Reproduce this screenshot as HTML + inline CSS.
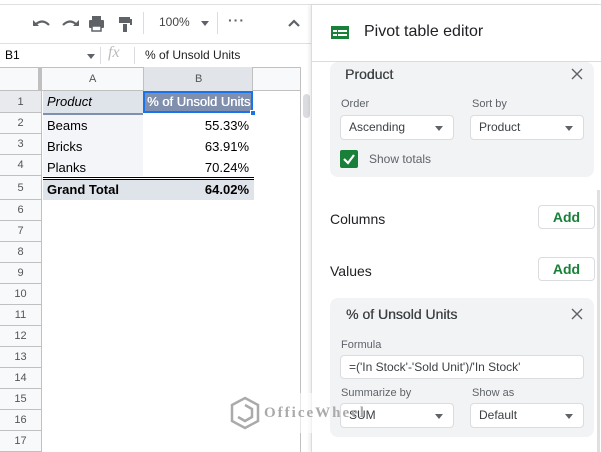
<!DOCTYPE html>
<html><head><style>
*{box-sizing:border-box;margin:0;padding:0}
body{width:601px;height:452px;overflow:hidden;background:#fff;font-family:"Liberation Sans",Arial,sans-serif;position:relative}
.a{position:absolute}
.rh{position:absolute;left:0;width:42px;text-align:center;font-size:11px;color:#555;background:#f8f9fa;border-bottom:1px solid #c0c0c0;border-right:1px solid #c0c0c0}
.cell{position:absolute;font-size:13px;color:#000;padding:0 4px;line-height:21px}
.card{position:absolute;left:330px;width:264px;background:#f1f3f4;border-radius:8px}
.dd{position:absolute;height:25px;background:#fff;border:1px solid #dadce0;border-radius:4px;font-size:12px;color:#3c4043;padding-left:8px;line-height:23px}
.dd:after{content:"";position:absolute;right:10px;top:10px;border:4px solid transparent;border-top:5px solid #5f6368}
.dd.nf:after{display:none}
.lbl{position:absolute;font-size:11px;color:#5f6368}
.add{position:absolute;left:538px;width:57px;height:24px;border:1px solid #dadce0;border-radius:4px;background:#fff;color:#188038;font-size:14px;font-weight:bold;text-align:center;line-height:22px}
.ttl{position:absolute;font-size:14px;color:#3c4043;text-shadow:0.3px 0 0 #3c4043}
</style></head><body>
<div class="a" style="left:0;top:4px;width:601px;height:1px;background:#e0e0e0"></div>
<svg class="a" style="left:30px;top:14px" width="240" height="20" viewBox="0 0 240 20">
<path d="M5 11 Q12 4 19 11" stroke="#5f6368" stroke-width="2.2" fill="none"/><path d="M3 6 L3 12 L9 12 Z" fill="#5f6368"/>
<path d="M33 11 Q40 4 47 11" stroke="#5f6368" stroke-width="2.2" fill="none"/><path d="M49 6 L49 12 L43 12 Z" fill="#5f6368"/>
<rect x="59" y="6" width="15" height="8" rx="1" fill="#5f6368"/><rect x="62" y="2" width="9" height="4" fill="#5f6368"/><rect x="62" y="12" width="9" height="5" fill="#fff" stroke="#5f6368" stroke-width="1.5"/>
<rect x="89" y="3" width="11" height="6" fill="#5f6368"/><rect x="100" y="5" width="2" height="6" fill="#5f6368"/><rect x="93" y="10" width="4" height="8" fill="#5f6368"/>
</svg>
<div class="a" style="left:143px;top:12px;width:1px;height:22px;background:#dadce0"></div>
<div class="a" style="left:159px;top:15px;font-size:12px;color:#444">100%</div>
<div class="a" style="left:201px;top:21px;border:4px solid transparent;border-top:5px solid #5f6368"></div>
<div class="a" style="left:217px;top:12px;width:1px;height:22px;background:#dadce0"></div>
<div class="a" style="left:228px;top:12px;font-size:14px;color:#5f6368;font-weight:bold;letter-spacing:1px">···</div>
<svg class="a" style="left:287px;top:18px" width="14" height="10"><path d="M2 8 L7 3 L12 8" stroke="#5f6368" stroke-width="2.2" fill="none"/></svg>
<div class="a" style="left:0;top:43px;width:312px;height:1px;background:#e0e0e0"></div>
<div class="a" style="left:5px;top:48px;font-size:12px;color:#000">B1</div>
<div class="a" style="left:87px;top:54px;border:4px solid transparent;border-top:5px solid #5f6368"></div>
<div class="a" style="left:100px;top:47px;width:1px;height:17px;background:#dadce0"></div>
<div class="a" style="left:108px;top:44px;font-size:16px;color:#bbb;font-style:italic;font-family:'Liberation Serif',serif">fx</div>
<div class="a" style="left:134px;top:47px;width:1px;height:17px;background:#dadce0"></div>
<div class="a" style="left:145px;top:48px;font-size:12px;color:#222">% of Unsold Units</div>
<div class="a" style="left:0;top:67px;width:301px;height:24px;background:#f8f9fa;border-top:1px solid #c0c0c0;border-bottom:1px solid #c0c0c0"></div>
<div class="a" style="left:0;top:67px;width:42px;height:24px;border-right:4px solid #c0c0c0"></div>
<div class="a" style="left:143px;top:67px;width:110px;height:24px;background:#e1e5ea;border-left:1px solid #c0c0c0;border-right:1px solid #c0c0c0"></div>
<div class="a" style="left:89px;top:73px;font-size:11px;color:#555">A</div>
<div class="a" style="left:195px;top:73px;font-size:11px;color:#555">B</div>
<div class="a" style="left:300px;top:67px;width:1px;height:385px;background:#c0c0c0"></div>
<div class="a" style="left:303px;top:94px;width:7px;height:24px;background:#dadce0;border-radius:4px"></div>
<div class="rh" style="top:91px;height:22px;line-height:22px;background:#e8eaed">1</div>
<div class="rh" style="top:113px;height:21px;line-height:21px">2</div>
<div class="rh" style="top:134px;height:21px;line-height:21px">3</div>
<div class="rh" style="top:155px;height:21px;line-height:21px">4</div>
<div class="rh" style="top:176px;height:24px;line-height:24px">5</div>
<div class="rh" style="top:200px;height:21px;line-height:21px">6</div>
<div class="rh" style="top:221px;height:21px;line-height:21px">7</div>
<div class="rh" style="top:242px;height:21px;line-height:21px">8</div>
<div class="rh" style="top:263px;height:21px;line-height:21px">9</div>
<div class="rh" style="top:284px;height:21px;line-height:21px">10</div>
<div class="rh" style="top:305px;height:21px;line-height:21px">11</div>
<div class="rh" style="top:326px;height:21px;line-height:21px">12</div>
<div class="rh" style="top:347px;height:21px;line-height:21px">13</div>
<div class="rh" style="top:368px;height:21px;line-height:21px">14</div>
<div class="rh" style="top:389px;height:21px;line-height:21px">15</div>
<div class="rh" style="top:410px;height:21px;line-height:21px">16</div>
<div class="rh" style="top:431px;height:21px;line-height:21px">17</div>
<div class="a" style="left:43px;top:91px;width:100px;height:22px;background:#dfe3ea"></div>
<div class="a" style="left:143px;top:91px;width:110px;height:22px;background:#7f8fad;border:2px solid #1a73e8"></div>
<div class="a" style="left:250px;top:110px;width:6px;height:6px;background:#1a73e8;border:1px solid #fff"></div>
<div class="a" style="left:43px;top:113px;width:100px;height:2px;background:#7f8fad"></div>
<div class="a" style="left:43px;top:115px;width:100px;height:61px;background:#f3f5f8"></div>
<div class="cell" style="left:43px;top:91px;font-style:italic">Product</div>
<div class="cell" style="left:145px;top:91px;color:#fff;font-size:13px;padding:0 2px;white-space:nowrap;width:108px;overflow:hidden;text-shadow:0.4px 0 0 #fff">% of Unsold Units</div>
<div class="cell" style="left:43px;top:115px">Beams</div>
<div class="cell" style="left:43px;top:136px">Bricks</div>
<div class="cell" style="left:43px;top:157px">Planks</div>
<div class="cell" style="left:143px;top:115px;width:110px;text-align:right">55.33%</div>
<div class="cell" style="left:143px;top:136px;width:110px;text-align:right">63.91%</div>
<div class="cell" style="left:143px;top:157px;width:110px;text-align:right">70.24%</div>
<div class="a" style="left:43px;top:177px;width:211px;height:3px;border-top:1px solid #000;border-bottom:1px solid #000"></div>
<div class="a" style="left:43px;top:180px;width:211px;height:20px;background:#dfe3ea"></div>
<div class="cell" style="left:43px;top:179px;font-weight:bold">Grand Total</div>
<div class="cell" style="left:143px;top:179px;width:110px;text-align:right;font-weight:bold">64.02%</div>
<div class="a" style="left:311px;top:5px;width:290px;height:447px;background:#fff;border-left:1px solid #dadce0;box-shadow:-2px 0 3px rgba(0,0,0,.08)"></div>
<svg class="a" style="left:331px;top:26px" width="18" height="13"><rect width="18" height="13" fill="#188038"/><rect x="2" y="4" width="4" height="2" fill="#fff"/><rect x="7" y="4" width="9" height="2" fill="#fff"/><rect x="2" y="8" width="4" height="2" fill="#fff"/><rect x="7" y="8" width="9" height="2" fill="#fff"/></svg>
<div class="a" style="left:364px;top:23px;font-size:16px;color:#202124">Pivot table editor</div>
<div class="a" style="left:312px;top:61px;width:289px;height:1px;background:#dadce0"></div>
<div class="a" style="left:597px;top:190px;width:3px;height:262px;background:#e0e0e0"></div>
<div class="card" style="top:62px;height:115px"></div>
<div class="ttl" style="left:345px;top:66px">Product</div>
<svg class="a" style="left:571px;top:68px" width="12" height="12"><path d="M1 1 L11 11 M11 1 L1 11" stroke="#5f6368" stroke-width="1.4"/></svg>
<div class="lbl" style="left:341px;top:98px">Order</div>
<div class="lbl" style="left:472px;top:98px">Sort by</div>
<div class="dd" style="left:340px;top:115px;width:114px">Ascending</div>
<div class="dd" style="left:470px;top:115px;width:114px">Product</div>
<svg class="a" style="left:340px;top:150px" width="18" height="18"><rect width="18" height="18" rx="2" fill="#188038"/><path d="M4 9 L8 13 L14 5" stroke="#fff" stroke-width="2.2" fill="none"/></svg>
<div class="a" style="left:369px;top:152px;font-size:12px;color:#5f6368">Show totals</div>
<div class="a" style="left:330px;top:211px;font-size:14px;color:#202124">Columns</div>
<div class="add" style="top:205px">Add</div>
<div class="a" style="left:330px;top:263px;font-size:14px;color:#202124">Values</div>
<div class="add" style="top:257px">Add</div>
<div class="card" style="top:298px;height:139px"></div>
<div class="ttl" style="left:346px;top:306px">% of Unsold Units</div>
<svg class="a" style="left:571px;top:308px" width="12" height="12"><path d="M1 1 L11 11 M11 1 L1 11" stroke="#5f6368" stroke-width="1.4"/></svg>
<div class="lbl" style="left:341px;top:339px">Formula</div>
<div class="dd nf" style="left:340px;top:355px;width:244px;height:24px;line-height:22px">=('In Stock'-'Sold Unit')/'In Stock'</div>
<div class="lbl" style="left:341px;top:387px">Summarize by</div>
<div class="lbl" style="left:472px;top:387px">Show as</div>
<div class="dd" style="left:340px;top:403px;width:114px">SUM</div>
<div class="dd" style="left:470px;top:403px;width:114px">Default</div>
<div class="a" style="left:226px;top:393px;width:100px;height:40px;background:rgba(255,255,255,.6)"></div>
<svg class="a" style="left:230px;top:396px" width="30" height="34"><path d="M15 2 L28 9 L28 25 L15 32 L2 25 L2 9 Z" stroke="#aaa" stroke-width="2.5" fill="none"/><path d="M15 9 L22 13 L22 21 L15 25 L8 21" stroke="#aaa" stroke-width="2.5" fill="none"/></svg>
<div class="a" style="left:264px;top:405px;font-size:15px;color:#aaa;font-family:'Liberation Serif',serif;letter-spacing:2px;font-weight:bold">OfficeWheel</div>
</body></html>
